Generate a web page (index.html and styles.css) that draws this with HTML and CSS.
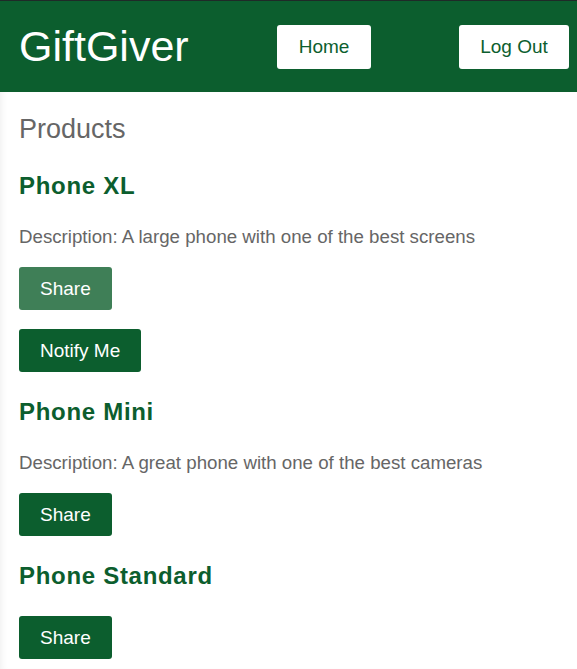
FILE: index.html
```html
<!DOCTYPE html>
<html>
<head>
<meta charset="utf-8">
<link rel="stylesheet" href="styles.css">
</head>
<body>
<header class="top-bar">
  <h1 class="brand">GiftGiver</h1>
  <nav class="nav">
    <button class="nav-btn home-btn">Home</button>
    <button class="nav-btn logout-btn">Log Out</button>
  </nav>
</header>
<main class="content">
  <h2 class="page-title">Products</h2>
  <section class="product">
    <h3 class="product-name">Phone XL</h3>
    <p class="desc">Description: A large phone with one of the best screens</p>
    <div class="actions">
      <button class="btn btn-hover">Share</button>
      <button class="btn">Notify Me</button>
    </div>
  </section>
  <section class="product">
    <h3 class="product-name">Phone Mini</h3>
    <p class="desc">Description: A great phone with one of the best cameras</p>
    <div class="actions">
      <button class="btn">Share</button>
    </div>
  </section>
  <section class="product">
    <h3 class="product-name">Phone Standard</h3>
    <div class="actions">
      <button class="btn">Share</button>
    </div>
  </section>
</main>
</body>
</html>
```
FILE: styles.css
```css
* { box-sizing: border-box; }
html, body {
  margin: 0;
  padding: 0;
  background: #ffffff;
  font-family: "Liberation Sans", Arial, sans-serif;
}
body {
  border-top: 1px solid #1f2a28;
  height: 669px;
  overflow: hidden;
}
.top-bar {
  background: #0c5e2e;
  height: 91px;
  display: flex;
  align-items: center;
  padding: 0 8px 0 19px;
}
.brand {
  margin: 0;
  font-weight: normal;
  font-size: 43px;
  color: #ffffff;
  width: 258px;
  line-height: 1;
}
.nav {
  flex: 1;
  display: flex;
  justify-content: space-between;
  align-items: center;
}
.nav-btn {
  background: #ffffff;
  color: #0c5e2e;
  border: none;
  border-radius: 3px;
  font-family: "Liberation Sans", Arial, sans-serif;
  font-size: 19px;
  height: 44px;
  padding: 0;
  margin-top: 1px;
}
.home-btn { width: 94px; }
.logout-btn { width: 110px; }
.content {
  padding: 20px 19px 0;
  box-shadow: inset 6px 0 6px -4px rgba(0,0,0,0.06);
  height: 577px;
}
.page-title {
  margin: 0;
  font-weight: normal;
  font-size: 27px;
  color: #666666;
  line-height: 34px;
}
.product-name {
  margin: 25px 0 0;
  font-size: 24px;
  letter-spacing: 0.7px;
  font-weight: bold;
  color: #0c5e2e;
  line-height: 30px;
}
.desc {
  margin: 25px 0 0;
  font-size: 18.7px;
  color: #666666;
  line-height: 22px;
}
.actions {
  display: flex;
  flex-direction: column;
  align-items: flex-start;
  gap: 19px;
  margin-top: 19px;
}
.product-name + .actions { margin-top: 25px; }
.btn {
  background: #0c5e2e;
  color: #ffffff;
  border: none;
  border-radius: 3px;
  font-family: "Liberation Sans", Arial, sans-serif;
  font-size: 19px;
  height: 43px;
  padding: 0 21px;
}
.btn-hover {
  background: #3f7f57;
}
```
